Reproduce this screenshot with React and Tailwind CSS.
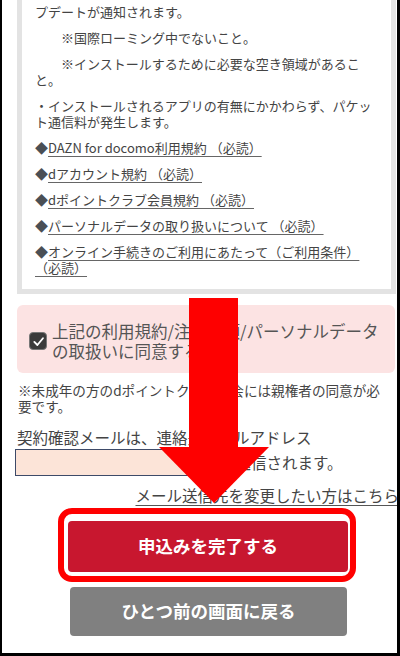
import React from 'react';

const links = [
  ['DAZN for docomo利用規約 （必読）'],
  ['dアカウント規約 （必読）'],
  ['dポイントクラブ会員規約 （必読）'],
  ['パーソナルデータの取り扱いについて （必読）'],
  ['オンライン手続きのご利用にあたって（ご利用条件）', '（必読）'],
];

function TermLink({ lines }) {
  return (
    <p className="mt-[10px] text-[13px] leading-[16px] text-[#444]">
      <span className="text-[#4a4f55]">◆</span>
      {lines.map((l, i) => (
        <React.Fragment key={i}>
          {i > 0 && <br />}
          <span className="underline decoration-[#666] underline-offset-[3px] whitespace-nowrap">{l}</span>
        </React.Fragment>
      ))}
    </p>
  );
}

export default function App() {
  return (
    <div
      className="relative w-[400px] h-[656px] overflow-hidden bg-white border-l-2 border-r-[3px] border-b-[3px] border-black"
      style={{ fontFamily: '"Noto Sans CJK JP", "Noto Sans", sans-serif' }}
    >
      {/* terms box, scrolled so its top is off screen */}
      <div className="ml-[15px] mr-[1px] border-x-[5px] border-b-[5px] border-[#e3e3e3] pl-[13px] pr-[8px] pt-[4px] pb-[13px] text-[13px] leading-[16px] text-[#444]">
        <p className="whitespace-nowrap">プデートが通知されます。</p>
        <p className="mt-[10px] pl-[26px] whitespace-nowrap">※国際ローミング中でないこと。</p>
        <p className="mt-[10px] whitespace-nowrap">
          <span className="pl-[26px]">※インストールするために必要な空き領域があるこ</span>
          <br />と。
        </p>
        <p className="mt-[10px] whitespace-nowrap">
          ・インストールされるアプリの有無にかかわらず、パケッ
          <br />ト通信料が発生します。
        </p>
        {links.map((l, i) => (
          <TermLink key={i} lines={l} />
        ))}
      </div>

      {/* agreement */}
      <div className="ml-[15px] mr-[2px] mt-[11px] h-[68px] rounded-[6px] bg-[#fce3e3] flex items-center pl-[12px] pt-[4px]">
        <div className="w-[18px] h-[18px] shrink-0 rounded-[4px] bg-[#3b3b3b] border border-[#777] flex items-center justify-center">
          <svg width="13" height="13" viewBox="0 0 14 14">
            <path d="M2.5 7.5 L5.8 10.8 L11.8 3.5" fill="none" stroke="#fff" strokeWidth="2" strokeLinecap="round" strokeLinejoin="round" />
          </svg>
        </div>
        <p className="ml-[5px] text-[16.5px] leading-[20px] text-[#555] whitespace-nowrap">
          上記の利用規約/注意事項/パーソナルデータ
          <br />の取扱いに同意する
        </p>
      </div>

      <p className="ml-[16px] mt-[9px] text-[13.6px] leading-[16px] text-[#444] whitespace-nowrap">
        ※未成年の方のdポイントクラブ入会には親権者の同意が必
        <br />要です。
      </p>

      <p className="ml-[15px] mt-[12px] text-[15.5px] leading-[23px] text-[#444] whitespace-nowrap">
        契約確認メールは、連絡先メールアドレス
      </p>
      <div className="flex items-center h-[27px] ml-[13px]">
        <div className="w-[200px] h-[27px] bg-[#fce4d8] border border-[#3d4a68]" />
        <span className="ml-[5px] text-[15.5px] text-[#444] whitespace-nowrap">に送信されます。</span>
      </div>

      <p className="mt-[8px] mr-[-2px] text-right text-[15.5px] leading-[22px] text-[#444] whitespace-nowrap">
        <span className="underline decoration-[#555] underline-offset-[3px]">メール送信先を変更したい方はこちら</span>
      </p>

      <div className="relative mt-[15px] ml-[66px] w-[280px]">
        <span className="absolute left-[-10px] right-[-8px] top-[-13px] bottom-[-10px] rounded-[14px] border-[6px] border-[#ff0000]" />
        <button className="w-[280px] h-[51px] rounded-[4px] bg-[#c8172f] text-white font-bold text-[17.5px]">
          申込みを完了する
        </button>
      </div>
      <button className="block mt-[15px] ml-[68px] w-[277px] h-[49px] rounded-[4px] bg-[#808080] text-white font-bold text-[17.5px]">
        ひとつ前の画面に戻る
      </button>

      {/* annotation arrow */}
      <svg className="absolute left-[153px] top-[296px]" width="118" height="212" viewBox="0 0 118 212">
        <rect x="34" y="2" width="49" height="152" fill="#fe0000" />
        <polygon points="4,151 114,151 59,207" fill="#fe0000" />
      </svg>
    </div>
  );
}
